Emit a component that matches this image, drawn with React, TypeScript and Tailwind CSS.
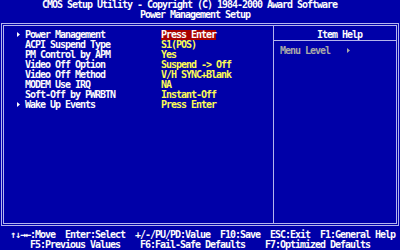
const items = [
  { label: 'Power Management', value: 'Press Enter', sub: true, active: true },
  { label: 'ACPI Suspend Type', value: 'S1(POS)' },
  { label: 'PM Control by APM', value: 'Yes' },
  { label: 'Video Off Option', value: 'Suspend -> Off' },
  { label: 'Video Off Method', value: 'V/H SYNC+Blank' },
  { label: 'MODEM Use IRQ', value: 'NA' },
  { label: 'Soft-Off by PWRBTN', value: 'Instant-Off' },
  { label: 'Wake Up Events', value: 'Press Enter', sub: true },
]

function Pointer({ color = '#fcfcfc' }: { color?: string }) {
  return (
    <svg width="4" height="10" viewBox="0 0 4 10" className="block">
      <polygon points="0,2 3,4.5 0,7" fill={color} />
    </svg>
  )
}

export default function App() {
  return (
    <div
      className="w-[400px] h-[250px] overflow-hidden bg-[#0000a8] text-[#fcfcfc] text-[10px] leading-[10px] font-bold tracking-[-1.02px] whitespace-pre"
      style={{ fontFamily: '"DejaVu Sans Mono", "Liberation Mono", monospace' }}
    >
      <div className="h-[10px] pl-[42px]">CMOS Setup Utility - Copyright (C) 1984-2000 Award Software</div>
      <div className="h-[10px] pl-[140px]">Power Management Setup</div>

      {/* main box */}
      <div className="mt-[3px] ml-[1px] w-[398px] h-[203px] border-[3px] border-double border-[#b4b4ec] flex">
        <div className="w-[269px] pt-[4px] pl-[13px]">
          {items.map((it) => (
            <div key={it.label} className="flex h-[10px]">
              <div className="w-[8px]">{it.sub && <Pointer />}</div>
              <div className="w-[136px]">{it.label}</div>
              <div>
                <span className={it.active ? 'inline-block h-[10px] bg-[#a80000] text-[#fcfcfc]' : 'text-[#fcfc54]'}>
                  {it.value}
                </span>
              </div>
            </div>
          ))}
        </div>
        <div className="flex-1 border-l border-[#b4b4ec]">
          <div className="pt-[4px] pl-[43px] h-[14px]">Item Help</div>
          <div className="border-t border-[#b4b4ec]" />
          <div className="mt-[5px] pl-[6px] flex h-[10px] text-[#a8a8a8]">
            <span>Menu Level</span>
            <span className="ml-[17px]">
              <Pointer color="#a8a8a8" />
            </span>
          </div>
        </div>
      </div>

      {/* key legend */}
      <div className="pt-[4px]">
        <div className="h-[10px] pl-[10px]">↑↓→←:Move  Enter:Select  +/-/PU/PD:Value  F10:Save  ESC:Exit  F1:General Help</div>
        <div className="h-[10px] pl-[30px]">F5:Previous Values    F6:Fail-Safe Defaults    F7:Optimized Defaults</div>
      </div>
    </div>
  )
}
